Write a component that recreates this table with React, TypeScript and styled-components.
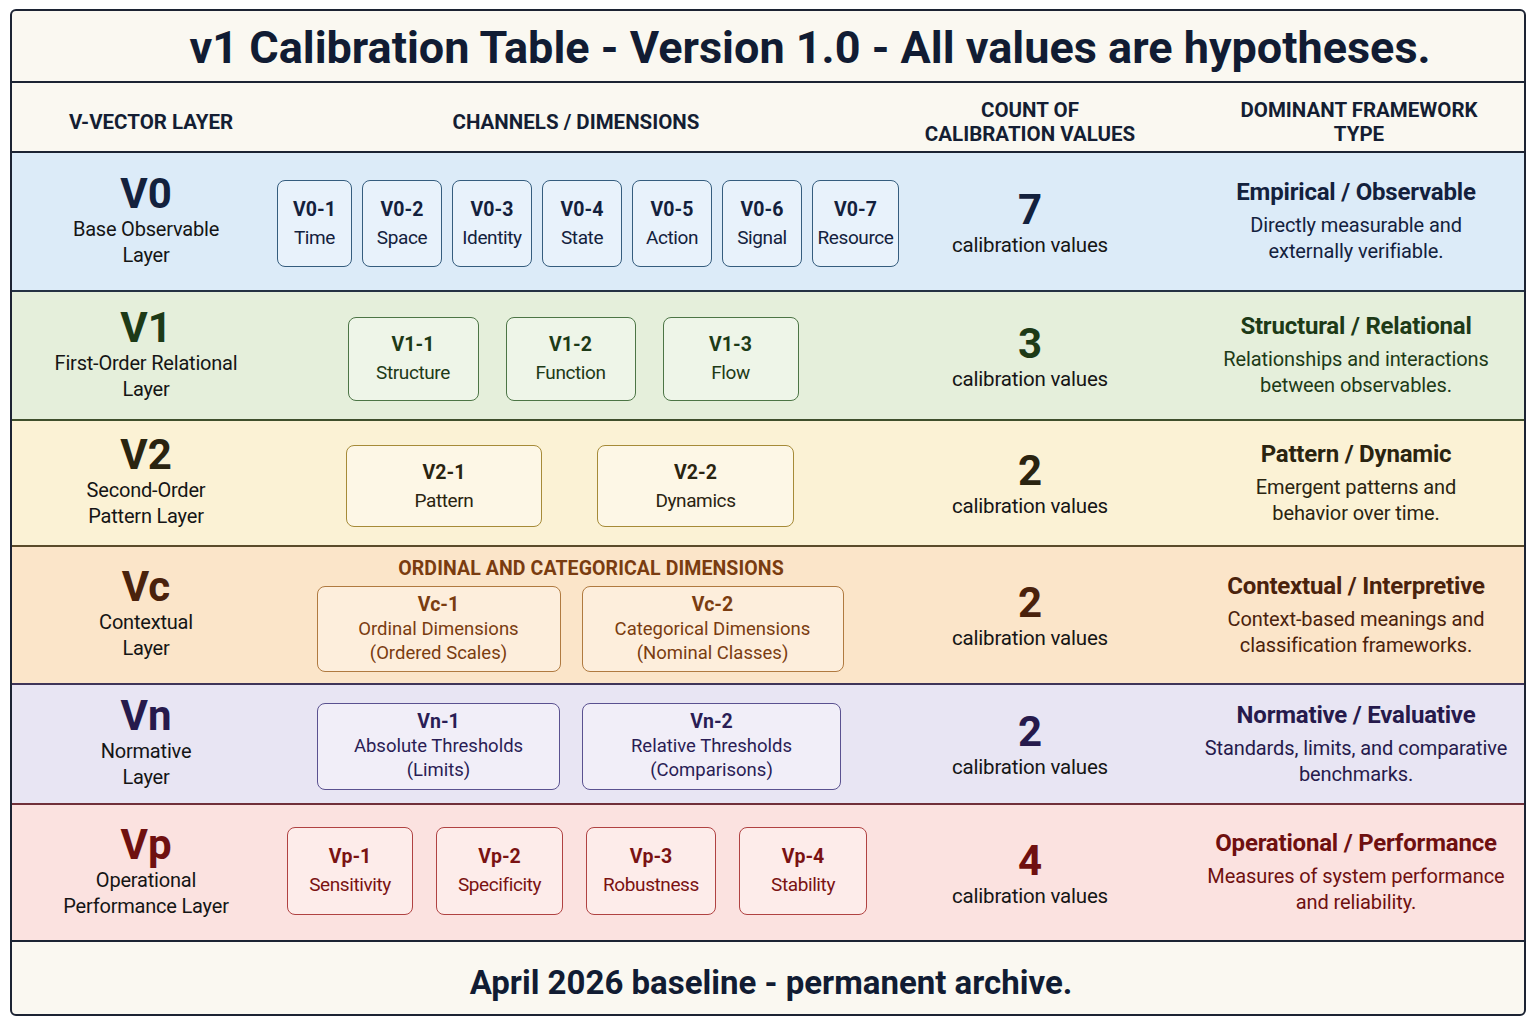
import styled, { createGlobalStyle } from "styled-components";

const GlobalStyle = createGlobalStyle`
  html, body {
    margin: 0;
    padding: 0;
    background: #ffffff;
  }
  body {
    font-family: Roboto, "Liberation Sans", Arial, sans-serif;
    color: #141e33;
  }
`;

type Tone = {
  bg: string;
  line: string;
  ink: string;
  boxInk: string;
  boxBorder: string;
  boxBg: string;
};

const tones: Record<string, Tone> = {
  v0: { bg: "#dcebf8", line: "#243243", ink: "#13213d", boxInk: "#13213d", boxBorder: "#355d7e", boxBg: "#e8f2fb" },
  v1: { bg: "#e5efdb", line: "#3f4f2c", ink: "#1d3a17", boxInk: "#1d3a17", boxBorder: "#4c7545", boxBg: "#eef5e8" },
  v2: { bg: "#fbf2d5", line: "#5a4b2a", ink: "#2a2410", boxInk: "#2a2410", boxBorder: "#a68b38", boxBg: "#fdf7e6" },
  vc: { bg: "#fbe5c9", line: "#3f3458", ink: "#4a220c", boxInk: "#7a3c10", boxBorder: "#b07a40", boxBg: "#fdeedc" },
  vn: { bg: "#e8e5f3", line: "#70303a", ink: "#261a4c", boxInk: "#2a1d55", boxBorder: "#5a5190", boxBg: "#f1eef8" },
  vp: { bg: "#fbe2e0", line: "#1c2333", ink: "#6f1010", boxInk: "#7a1212", boxBorder: "#b04242", boxBg: "#fdecea" },
};

const Frame = styled.div`
  box-sizing: border-box;
  margin: 9px 0 0 10px;
  width: 1516px;
  height: 1007px;
  border: 2px solid #1c2333;
  border-radius: 6px;
  overflow: hidden;
  display: flex;
  flex-direction: column;
  background: #faf8f1;
`;

const TitleBar = styled.div`
  box-sizing: border-box;
  height: 72px;
  border-bottom: 2px solid #1c2333;
  display: flex;
  align-items: center;
  justify-content: center;
  padding: 2px 0 0 84px;
`;

const Title = styled.h1`
  margin: 0;
  font-size: 45px;
  font-weight: 700;
  color: #111c33;
`;

const Grid = styled.div`
  display: grid;
  grid-template-columns: 268px 592px 316px 1fr;
`;

const HeaderRow = styled(Grid)`
  box-sizing: border-box;
  height: 70px;
  padding-top: 10px;
  border-bottom: 2px solid #1c2333;
  align-items: center;
`;

const HeadCell = styled.div<{ $shift?: number }>`
  text-align: center;
  font-size: 20.5px;
  font-weight: 700;
  line-height: 24px;
  text-transform: uppercase;
  color: #141e33;
  transform: translateX(${(p) => p.$shift ?? 0}px);
`;

const Row = styled(Grid)<{ $tone: Tone; $h: number }>`
  box-sizing: border-box;
  height: ${(p) => p.$h}px;
  background: ${(p) => p.$tone.bg};
  border-bottom: 2px solid ${(p) => p.$tone.line};
  align-items: center;
`;

const LayerCell = styled.div<{ $tone: Tone }>`
  display: flex;
  flex-direction: column;
  align-items: center;
  text-align: center;
  color: ${(p) => p.$tone.ink};
`;

const LayerCode = styled.div`
  font-size: 42px;
  font-weight: 700;
  line-height: 36px;
  margin-bottom: 4px;
`;

const LayerName = styled.div`
  font-size: 20px;
  line-height: 26px;
  color: #151515;
  letter-spacing: -0.2px;
`;

const ChannelCell = styled.div<{ $shift: number; $dy: number }>`
  display: flex;
  flex-direction: column;
  align-items: center;
  transform: translate(${(p) => p.$shift}px, ${(p) => p.$dy}px);
`;

const GroupLabel = styled.div<{ $tone: Tone }>`
  font-size: 19.5px;
  font-weight: 700;
  line-height: 22px;
  color: ${(p) => p.$tone.boxInk};
  margin: 0 0 6px 22px;
  letter-spacing: 0.1px;
`;

const BoxRow = styled.div<{ $gap: number }>`
  display: flex;
  gap: ${(p) => p.$gap}px;
`;

const Box = styled.div<{ $tone: Tone; $w: number; $h: number }>`
  box-sizing: border-box;
  width: ${(p) => p.$w}px;
  height: ${(p) => p.$h}px;
  border: 1.5px solid ${(p) => p.$tone.boxBorder};
  border-radius: 8px;
  background: ${(p) => p.$tone.boxBg};
  display: flex;
  flex-direction: column;
  align-items: center;
  justify-content: center;
  text-align: center;
  color: ${(p) => p.$tone.boxInk};
`;

const BoxCode = styled.div<{ $compact?: boolean }>`
  font-size: 19.5px;
  font-weight: 700;
  line-height: ${(p) => (p.$compact ? 24 : 29)}px;
`;

const BoxText = styled.div<{ $compact?: boolean }>`
  font-size: ${(p) => (p.$compact ? 18.5 : 19)}px;
  line-height: ${(p) => (p.$compact ? 24 : 28)}px;
  letter-spacing: ${(p) => (p.$compact ? 0 : -0.4)}px;
  white-space: nowrap;
`;

const CountCell = styled.div<{ $tone: Tone }>`
  display: flex;
  flex-direction: column;
  align-items: center;
  color: ${(p) => p.$tone.ink};
  padding-top: 6px;
`;

const CountNum = styled.div`
  font-size: 42px;
  font-weight: 700;
  line-height: 40px;
`;

const CountLabel = styled.div`
  font-size: 20.5px;
  line-height: 30px;
  color: #151515;
  letter-spacing: -0.2px;
`;

const TypeCell = styled.div`
  display: flex;
  flex-direction: column;
  align-items: center;
  text-align: center;
  padding-bottom: 2px;
`;

const TypeTitle = styled.div<{ $tone: Tone }>`
  font-size: 24px;
  font-weight: 700;
  line-height: 30px;
  color: ${(p) => p.$tone.ink};
  letter-spacing: -0.2px;
  margin-bottom: 5px;
`;

const TypeDesc = styled.div<{ $tone: Tone }>`
  font-size: 20px;
  line-height: 26px;
  color: ${(p) => p.$tone.ink};
  letter-spacing: -0.1px;
`;

const Footer = styled.div`
  flex: 1;
  display: flex;
  align-items: center;
  justify-content: center;
  padding: 8px 0 0 6px;
  font-size: 33px;
  font-weight: 700;
  color: #111c33;
`;

type Channel = { code: string; lines: string[]; w: number };

type Layer = {
  key: string;
  code: string;
  name: string[];
  h: number;
  shift: number;
  dy: number;
  gap: number;
  boxH: number;
  compact?: boolean;
  group?: string;
  channels: Channel[];
  count: number;
  type: string;
  desc: string[];
};

const layers: Layer[] = [
  {
    key: "v0",
    code: "V0",
    name: ["Base Observable", "Layer"],
    h: 139,
    shift: 12,
    dy: 2,
    gap: 10,
    boxH: 87,
    channels: [
      { code: "V0-1", lines: ["Time"], w: 75 },
      { code: "V0-2", lines: ["Space"], w: 80 },
      { code: "V0-3", lines: ["Identity"], w: 80 },
      { code: "V0-4", lines: ["State"], w: 80 },
      { code: "V0-5", lines: ["Action"], w: 80 },
      { code: "V0-6", lines: ["Signal"], w: 80 },
      { code: "V0-7", lines: ["Resource"], w: 87 },
    ],
    count: 7,
    type: "Empirical / Observable",
    desc: ["Directly measurable and", "externally verifiable."],
  },
  {
    key: "v1",
    code: "V1",
    name: ["First-Order Relational", "Layer"],
    h: 129,
    shift: -3,
    dy: 3,
    gap: 27,
    boxH: 84,
    channels: [
      { code: "V1-1", lines: ["Structure"], w: 131 },
      { code: "V1-2", lines: ["Function"], w: 130 },
      { code: "V1-3", lines: ["Flow"], w: 136 },
    ],
    count: 3,
    type: "Structural / Relational",
    desc: ["Relationships and interactions", "between observables."],
  },
  {
    key: "v2",
    code: "V2",
    name: ["Second-Order", "Pattern Layer"],
    h: 126,
    shift: -6,
    dy: 3,
    gap: 55,
    boxH: 82,
    channels: [
      { code: "V2-1", lines: ["Pattern"], w: 196 },
      { code: "V2-2", lines: ["Dynamics"], w: 197 },
    ],
    count: 2,
    type: "Pattern / Dynamic",
    desc: ["Emergent patterns and", "behavior over time."],
  },
  {
    key: "vc",
    code: "Vc",
    name: ["Contextual", "Layer"],
    h: 138,
    shift: 4,
    dy: 0,
    gap: 21,
    boxH: 86,
    compact: true,
    group: "ORDINAL AND CATEGORICAL DIMENSIONS",
    channels: [
      { code: "Vc-1", lines: ["Ordinal Dimensions", "(Ordered Scales)"], w: 244 },
      { code: "Vc-2", lines: ["Categorical Dimensions", "(Nominal Classes)"], w: 262 },
    ],
    count: 2,
    type: "Contextual / Interpretive",
    desc: ["Context-based meanings and", "classification frameworks."],
  },
  {
    key: "vn",
    code: "Vn",
    name: ["Normative", "Layer"],
    h: 120,
    shift: 3,
    dy: 2,
    gap: 22,
    boxH: 87,
    compact: true,
    channels: [
      { code: "Vn-1", lines: ["Absolute Thresholds", "(Limits)"], w: 243 },
      { code: "Vn-2", lines: ["Relative Thresholds", "(Comparisons)"], w: 259 },
    ],
    count: 2,
    type: "Normative / Evaluative",
    desc: ["Standards, limits, and comparative", "benchmarks."],
  },
  {
    key: "vp",
    code: "Vp",
    name: ["Operational", "Performance Layer"],
    h: 137,
    shift: 1,
    dy: -2,
    gap: 23,
    boxH: 88,
    channels: [
      { code: "Vp-1", lines: ["Sensitivity"], w: 126 },
      { code: "Vp-2", lines: ["Specificity"], w: 127 },
      { code: "Vp-3", lines: ["Robustness"], w: 130 },
      { code: "Vp-4", lines: ["Stability"], w: 128 },
    ],
    count: 4,
    type: "Operational / Performance",
    desc: ["Measures of system performance", "and reliability."],
  },
];

const LayerRow = ({ layer }: { layer: Layer }) => {
  const tone = tones[layer.key];
  return (
    <Row $tone={tone} $h={layer.h}>
      <LayerCell $tone={tone}>
        <LayerCode>{layer.code}</LayerCode>
        {layer.name.map((n) => (
          <LayerName key={n}>{n}</LayerName>
        ))}
      </LayerCell>
      <ChannelCell $shift={layer.shift} $dy={layer.dy}>
        {layer.group && <GroupLabel $tone={tone}>{layer.group}</GroupLabel>}
        <BoxRow $gap={layer.gap}>
          {layer.channels.map((c) => (
            <Box key={c.code} $tone={tone} $w={c.w} $h={layer.boxH}>
              <BoxCode $compact={layer.compact}>{c.code}</BoxCode>
              {c.lines.map((l) => (
                <BoxText key={l} $compact={layer.compact}>{l}</BoxText>
              ))}
            </Box>
          ))}
        </BoxRow>
      </ChannelCell>
      <CountCell $tone={tone}>
        <CountNum>{layer.count}</CountNum>
        <CountLabel>calibration values</CountLabel>
      </CountCell>
      <TypeCell>
        <TypeTitle $tone={tone}>{layer.type}</TypeTitle>
        {layer.desc.map((d) => (
          <TypeDesc key={d} $tone={tone}>{d}</TypeDesc>
        ))}
      </TypeCell>
    </Row>
  );
};

const App = () => {
  return (
    <>
      <GlobalStyle />
      <Frame>
        <TitleBar>
          <Title>v1 Calibration Table - Version 1.0 - All values are hypotheses.</Title>
        </TitleBar>
        <HeaderRow>
          <HeadCell $shift={5}>V-Vector Layer</HeadCell>
          <HeadCell>Channels / Dimensions</HeadCell>
          <HeadCell>
            Count of
            <br />
            Calibration Values
          </HeadCell>
          <HeadCell $shift={3}>
            Dominant Framework
            <br />
            Type
          </HeadCell>
        </HeaderRow>
        {layers.map((l) => (
          <LayerRow key={l.key} layer={l} />
        ))}
        <Footer>April 2026 baseline - permanent archive.</Footer>
      </Frame>
    </>
  );
};

export default App;
